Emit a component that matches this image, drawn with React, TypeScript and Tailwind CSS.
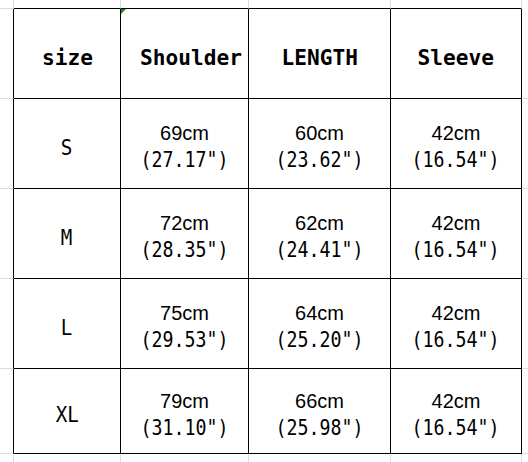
const rows = [
  { size: "S", cells: [["69cm", '(27.17")'], ["60cm", '(23.62")'], ["42cm", '(16.54")']] },
  { size: "M", cells: [["72cm", '(28.35")'], ["62cm", '(24.41")'], ["42cm", '(16.54")']] },
  { size: "L", cells: [["75cm", '(29.53")'], ["64cm", '(25.20")'], ["42cm", '(16.54")']] },
  { size: "XL", cells: [["79cm", '(31.10")'], ["66cm", '(25.98")'], ["42cm", '(16.54")']] },
];

const mono = "font-['DejaVu_Sans_Mono',monospace]";
const sans = "font-['Liberation_Sans',Arial,sans-serif]";

// spreadsheet gridline cell outside the table
function Gap({ r = false, b = false }: { r?: boolean; b?: boolean }) {
  return (
    <div
      className={`${r ? "border-r border-r-[#dcdcdc]" : ""} ${b ? "border-b border-b-[#dcdcdc]" : ""}`}
    />
  );
}

function Cell({ children, className = "" }: { children: React.ReactNode; className?: string }) {
  return (
    <div
      className={`flex flex-col items-center justify-center border-r border-b border-black pt-[7px] text-black ${className}`}
    >
      {children}
    </div>
  );
}

function Head({ label, className = "" }: { label: string; className?: string }) {
  return (
    <Cell className={className}>
      <span className={`${mono} inline-block scale-x-[0.96] text-[22px] leading-[27px] font-bold`}>{label}</span>
    </Cell>
  );
}

export default function App() {
  return (
    <div className="relative grid h-[462px] w-[528px] grid-cols-[14px_107px_128px_142px_131px_1fr] grid-rows-[9px_90px_90px_90px_90px_85px_1fr] bg-white">
      {/* top margin row */}
      <Gap r b />
      <div className="border-r border-b border-r-[#dcdcdc] border-b-black" />
      <div className="border-r border-b border-r-[#dcdcdc] border-b-black" />
      <div className="border-r border-b border-r-[#dcdcdc] border-b-black" />
      <div className="border-r border-b border-r-[#dcdcdc] border-b-black" />
      <Gap />

      {/* header */}
      <div className="border-r border-b border-r-black border-b-[#dcdcdc]" />
      <Head label="size" />
      <Head label="Shoulder" className="pl-3" />
      <Head label="LENGTH" />
      <Head label="Sleeve" />
      <Gap b />

      {rows.map((row) => (
        <div key={row.size} className="contents">
          <div className="border-r border-b border-r-black border-b-[#dcdcdc]" />
          <Cell>
            <span className={`${mono} inline-block scale-x-[0.87] text-[22px] leading-[27px]`}>{row.size}</span>
          </Cell>
          {row.cells.map(([cm, inch], i) => (
            <Cell key={i}>
              <span className={`${sans} text-[20px] leading-[27px]`}>{cm}</span>
              <span className={`${mono} inline-block scale-x-[0.87] text-[21px] leading-[27px] whitespace-nowrap`}>
                {inch}
              </span>
            </Cell>
          ))}
          <Gap b />
        </div>
      ))}

      {/* bottom margin row */}
      <Gap r />
      <Gap r />
      <Gap r />
      <Gap r />
      <Gap r />
      <Gap />

      {/* cell indicator on the Shoulder header */}
      <svg className="pointer-events-none absolute top-[9px] left-[121px]" width="5" height="5" viewBox="0 0 5 5">
        <polygon points="0,0 5,0 0,5" fill="#1f8a1f" />
      </svg>
    </div>
  );
}
